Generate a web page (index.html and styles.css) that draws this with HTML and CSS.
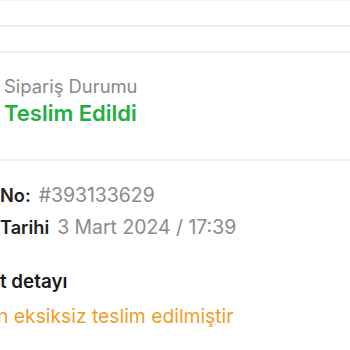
FILE: index.html
```html
<!DOCTYPE html>
<html lang="tr">
<head>
<meta charset="utf-8">
<link rel="stylesheet" href="styles.css">
</head>
<body>
<div class="page">
  <div class="bar"></div>
  <div class="bar"></div>
  <section class="status">
    <div class="status-label">Sipariş Durumu</div>
    <div class="status-value">Teslim Edildi</div>
  </section>
  <section class="info">
    <div class="row"><span class="key">No:</span><span class="val">#393133629</span></div>
    <div class="row"><span class="key">Tarihi</span><span class="val">3 Mart 2024 / 17:39</span></div>
  </section>
  <section class="detail">
    <div class="detail-title">t detayı</div>
    <div class="detail-text">n eksiksiz teslim edilmiştir</div>
  </section>
</div>
</body>
</html>
```
FILE: styles.css
```css
html, body { margin: 0; padding: 0; background: #fff; }
body { font-family: Inter, "Noto Sans", sans-serif; width: 350px; height: 350px; overflow: hidden; }
.page { border-top: 1px solid #f0f0f0; }
.bar { height: 24px; border-bottom: 2px solid #eeeeee; }
.status { padding: 20px 0 0 4px; height: 86px; border-bottom: 2px solid #eeeeee; }
.status-label { font-size: 18.4px; color: #8a8a8a; line-height: 26px; }
.status-value { font-size: 22px; font-weight: 600; color: #1fb03e; line-height: 28px; }
.info { padding-top: 18px; }
.row { display: flex; gap: 8px; font-size: 19.4px; line-height: 32px; }
.key { font-weight: 600; color: #222; font-size: 18.2px; }
.val { color: #8a8a8a; }
.detail { padding-top: 22px; }
.detail-title { font-size: 18.8px; font-weight: 600; color: #1a1a1a; line-height: 34px; }
.detail-text { font-size: 19.3px; color: #f39c1f; line-height: 34px; margin-left: -3px; }
```
